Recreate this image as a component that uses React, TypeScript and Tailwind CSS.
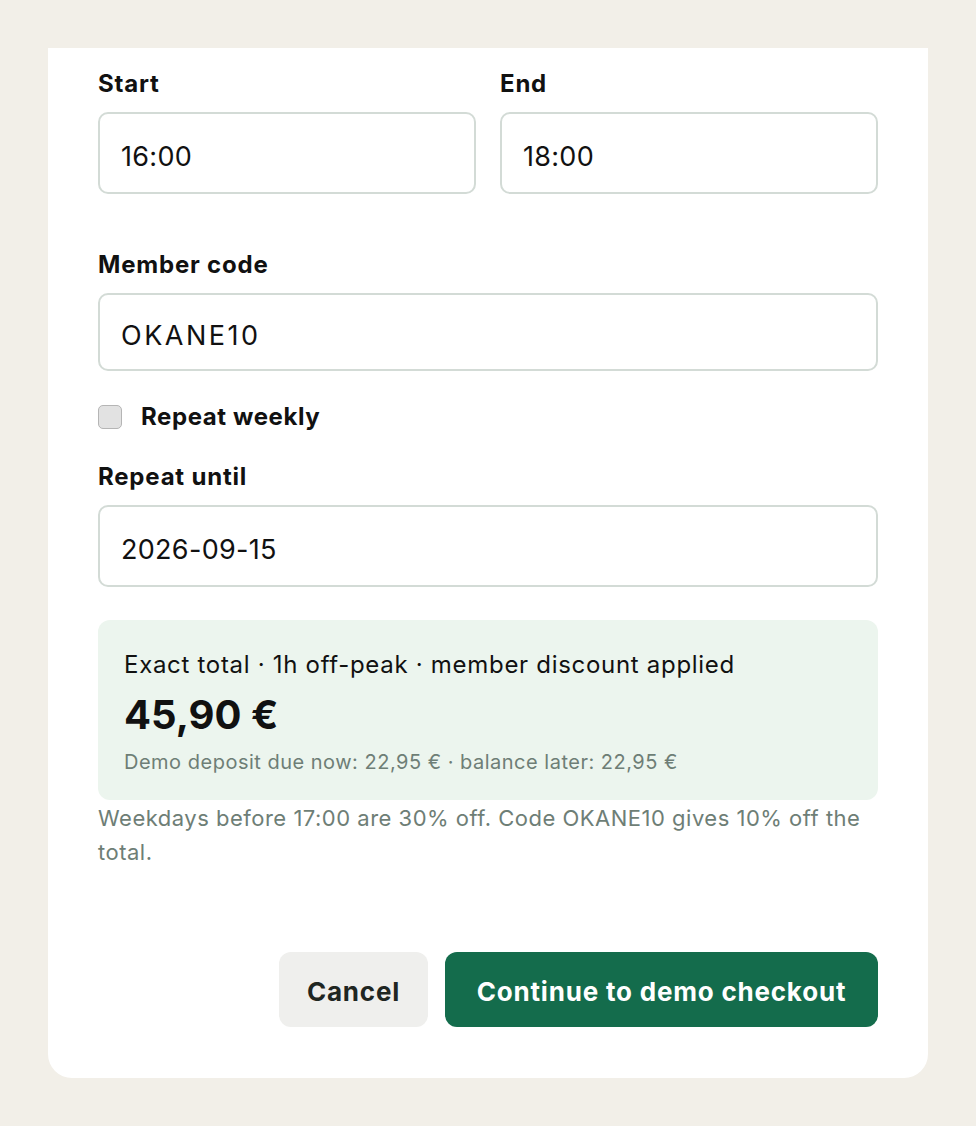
export default function App() {
  return (
    <div className="min-h-[1126px] bg-[#f2efe8] pt-[48px] font-['Inter',sans-serif] text-[#111]">
      <div className="mx-[48px] w-[880px] rounded-b-[24px] bg-white px-[50px] pb-[51px] pt-[21px]">
        <div className="grid grid-cols-2 gap-[24px]">
          <Field label="Start" value="16:00" tall />
          <Field label="End" value="18:00" tall />
        </div>
        <div className="mt-[56px]">
          <Field label="Member code" value="OKANE10" wide />
        </div>
        <label className="mt-[31px] flex items-center gap-[19px]">
          <span className="h-[24px] w-[24px] rounded-[5px] border border-[#b5b5b5] bg-[#e2e2e2]" />
          <span className="text-[24px] font-bold leading-[30px] tracking-[0.6px]">Repeat weekly</span>
        </label>
        <div className="mt-[30px]">
          <Field label="Repeat until" value="2026-09-15" tall />
        </div>
        <div className="mt-[33px] rounded-[12px] bg-[#ecf5ee] px-[26px] pb-[25px] pt-[30px]">
          <p className="text-[24px] leading-[30px] tracking-[0.7px]">Exact total · 1h off-peak · member discount applied</p>
          <p className="mt-[11px] text-[40px] font-bold leading-[48px]">45,90 €</p>
          <p className="mt-[10px] text-[20px] leading-[26px] tracking-[0.5px] text-[#6e7e76]">
            Demo deposit due now: 22,95 € · balance later: 22,95 €
          </p>
        </div>
        <p className="mt-[1px] text-[22px] leading-[34px] tracking-[0.5px] text-[#6e7e76]">
          Weekdays before 17:00 are 30% off. Code OKANE10 gives 10% off the total.
        </p>
        <div className="mt-[83px] flex justify-end gap-[17px]">
          <button className="h-[75px] w-[149px] rounded-[12px] bg-[#efefed] pt-[4px] text-[26px] font-bold tracking-[0.8px] text-[#1f2622]">
            Cancel
          </button>
          <button className="h-[75px] w-[433px] rounded-[12px] bg-[#146c4c] pt-[4px] text-[26px] font-bold tracking-[0.8px] text-white">
            Continue to demo checkout
          </button>
        </div>
      </div>
    </div>
  )
}

function Field({ label, value, tall, wide }: { label: string; value: string; tall?: boolean; wide?: boolean }) {
  return (
    <div>
      <p className="text-[24px] font-bold leading-[30px] tracking-[0.8px]">{label}</p>
      <div
        className={`mt-[13px] flex items-center rounded-[10px] border-2 border-[#d3dbd6] px-[21px] pt-[8px] text-[27px] ${wide ? 'tracking-[2.5px]' : 'tracking-[0.3px]'} ${tall ? 'h-[82px]' : 'h-[78px]'}`}
      >
        {value}
      </div>
    </div>
  )
}
